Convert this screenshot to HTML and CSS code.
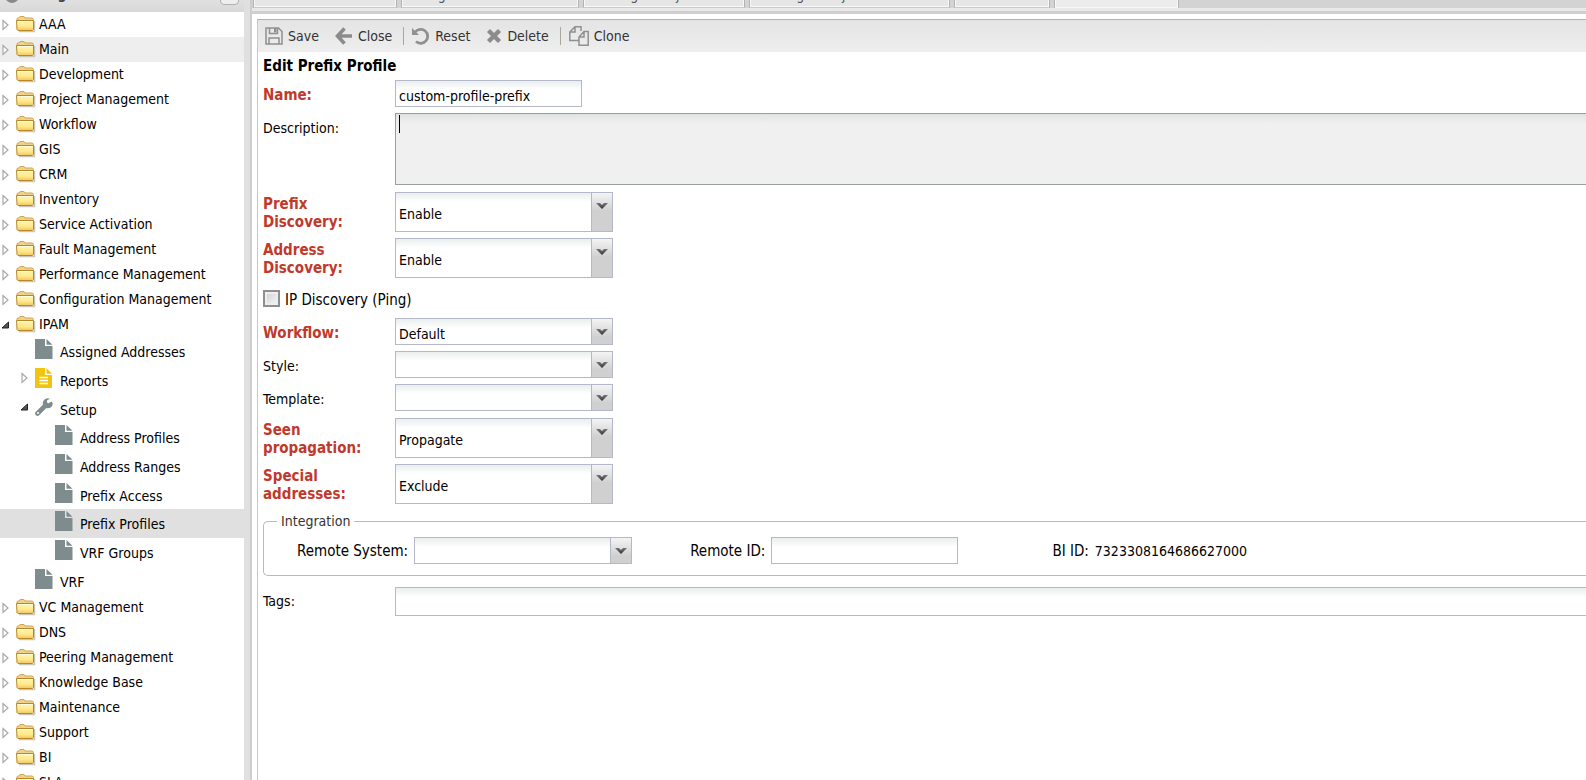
FILE: index.html
```
<!DOCTYPE html>
<html lang="en">
<head>
  <meta charset="UTF-8">
  <title>Prefix Profiles</title>
  <meta name="viewport" content="width=device-width, initial-scale=1">
  <link rel="stylesheet" href="styles.css">
</head>
<body>
  <svg class="sprite" aria-hidden="true">
    <defs>
      <linearGradient id="folderFill" x1="0" y1="0" x2="0" y2="1">
        <stop offset="0" stop-color="#fff8b4"/>
        <stop offset=".6" stop-color="#ffe88a"/>
        <stop offset="1" stop-color="#f2c45e"/>
      </linearGradient>
      <linearGradient id="chevronFill" x1="0" y1="0" x2="0" y2="1">
        <stop offset="0" stop-color="#777"/>
        <stop offset="1" stop-color="#333"/>
      </linearGradient>
      <symbol id="i-folder" viewBox="0 0 20 18">
        <path d="M3 16.5H18.5V6" fill="none" stroke="#c9c5bd" stroke-width="1.5"/>
        <path d="M1 6V3.500L2.500 3H3L4 1.500H8L9 3H16.500L17.500 4.500V6Z" fill="#f0d28a" stroke="#cfa552"/>
        <path d="M.5 5.500H17.500V14.500L16.500 15.500H2L1 14.500Z" fill="url(#folderFill)" stroke="#b98727"/>
        <path d="M2 6.500H16.500" stroke="#fffde0"/>
      </symbol>
      <symbol id="i-file" viewBox="0 0 18 20">
        <path d="M0 0H10V7H17.500V20H0Z" fill="#7f8c8d"/>
        <path d="M11.500 0L17.500 5.800H11.500Z" fill="#7f8c8d"/>
      </symbol>
      <symbol id="i-report" viewBox="0 0 18 20">
        <path d="M0 0H10V7H17V20H0Z" fill="#f1c40f"/>
        <path d="M11.500 0L17 5.800H11.500Z" fill="#f1c40f"/>
        <path d="M4.500 9.500H13M4.500 12.500H13M4.500 15.500H13" stroke="#fff" stroke-width="1.300"/>
      </symbol>
      <symbol id="i-wrench" viewBox="0 0 18 18">
        <path d="M2.500 15.500L11 7" stroke="#7f8c8d" stroke-width="4.600" stroke-linecap="round"/>
        <path d="M16.500 3.600L13.500 5.200L12 4.400V2.500L14.800 .7A5 5 0 1 0 17.800 5.500Z" fill="#7f8c8d"/>
        <circle cx="3" cy="15" r="1" fill="#fff"/>
      </symbol>
      <symbol id="i-closed" viewBox="0 0 8 12">
        <path d="M1.500 1.500L6.500 6L1.500 10.500Z" fill="#fff" stroke="#a8a8a8" stroke-width="1.200"/>
      </symbol>
      <symbol id="i-open" viewBox="0 0 9 9">
        <path d="M7.500 1.500V7.500H1Z" fill="#555" stroke="#222"/>
      </symbol>
      <symbol id="i-save" viewBox="0 0 18 18">
        <path d="M1 1H13.500L17 4.500V17H1Z M4.500 1V6.500H12.500V1 M4 17V11H14V17" fill="none" stroke="#909090" stroke-width="1.500"/>
        <path d="M9 1H11.500V5.500H9Z" fill="#909090"/>
      </symbol>
      <symbol id="i-close" viewBox="0 0 18 18">
        <path d="M9.500 1.500L2.500 9L9.500 16.500M3 9H17" fill="none" stroke="#8c8c8c" stroke-width="3.600"/>
      </symbol>
      <symbol id="i-reset" viewBox="0 0 18 18">
        <path d="M3.300 4.800A7 7 0 1 1 4 14.500" fill="none" stroke="#909090" stroke-width="2.800"/>
        <path d="M0 1V8H7Z" fill="#909090"/>
      </symbol>
      <symbol id="i-delete" viewBox="0 0 16 16">
        <path d="M2.500 2.500L13.500 13.500M13.500 2.500L2.500 13.500" stroke="#8c8c8c" stroke-width="4.400"/>
      </symbol>
      <symbol id="i-clone" viewBox="0 0 20 20">
        <path d="M10 14.500H.8V6L6 .8H12V5 M6 .8V6H.8 M10 11L15 5.500H19.200V19.200H10Z M15 5.500V11H10" fill="none" stroke="#909090" stroke-width="1.500"/>
      </symbol>
      <symbol id="i-chevron" viewBox="0 0 12 8">
        <path d="M0 1H4L6 3L8 1H12L6 7Z" fill="url(#chevronFill)"/>
      </symbol>
    </defs>
  </svg>

  <div class="app">
    <aside class="sidebar">
      <div class="sidebar-header">
        <span class="globe"></span>
        <h2>Navigation</h2>
        <button class="collapse" aria-label="Collapse"></button>
      </div>
      <nav>
        <ul class="tree">
          <li><a href="#"><svg class="arrow"><use href="#i-closed"/></svg><svg class="folder"><use href="#i-folder"/></svg>AAA</a></li>
          <li><a href="#" class="hover"><svg class="arrow"><use href="#i-closed"/></svg><svg class="folder"><use href="#i-folder"/></svg>Main</a></li>
          <li><a href="#"><svg class="arrow"><use href="#i-closed"/></svg><svg class="folder"><use href="#i-folder"/></svg>Development</a></li>
          <li><a href="#"><svg class="arrow"><use href="#i-closed"/></svg><svg class="folder"><use href="#i-folder"/></svg>Project Management</a></li>
          <li><a href="#"><svg class="arrow"><use href="#i-closed"/></svg><svg class="folder"><use href="#i-folder"/></svg>Workflow</a></li>
          <li><a href="#"><svg class="arrow"><use href="#i-closed"/></svg><svg class="folder"><use href="#i-folder"/></svg>GIS</a></li>
          <li><a href="#"><svg class="arrow"><use href="#i-closed"/></svg><svg class="folder"><use href="#i-folder"/></svg>CRM</a></li>
          <li><a href="#"><svg class="arrow"><use href="#i-closed"/></svg><svg class="folder"><use href="#i-folder"/></svg>Inventory</a></li>
          <li><a href="#"><svg class="arrow"><use href="#i-closed"/></svg><svg class="folder"><use href="#i-folder"/></svg>Service Activation</a></li>
          <li><a href="#"><svg class="arrow"><use href="#i-closed"/></svg><svg class="folder"><use href="#i-folder"/></svg>Fault Management</a></li>
          <li><a href="#"><svg class="arrow"><use href="#i-closed"/></svg><svg class="folder"><use href="#i-folder"/></svg>Performance Management</a></li>
          <li><a href="#"><svg class="arrow"><use href="#i-closed"/></svg><svg class="folder"><use href="#i-folder"/></svg>Configuration Management</a></li>
          <li>
            <a href="#"><svg class="arrow"><use href="#i-open"/></svg><svg class="folder"><use href="#i-folder"/></svg>IPAM</a>
            <ul class="branch">
              <li><a href="#" class="level-1"><svg class="page"><use href="#i-file"/></svg>Assigned Addresses</a></li>
              <li><a href="#" class="level-1 has-arrow"><svg class="arrow"><use href="#i-closed"/></svg><svg class="page"><use href="#i-report"/></svg>Reports</a></li>
              <li><a href="#" class="level-1 has-arrow"><svg class="arrow"><use href="#i-open"/></svg><svg class="page"><use href="#i-wrench"/></svg>Setup</a></li>
              <li><a href="#" class="level-2"><svg class="page"><use href="#i-file"/></svg>Address Profiles</a></li>
              <li><a href="#" class="level-2"><svg class="page"><use href="#i-file"/></svg>Address Ranges</a></li>
              <li><a href="#" class="level-2"><svg class="page"><use href="#i-file"/></svg>Prefix Access</a></li>
              <li><a href="#" class="level-2 selected"><svg class="page"><use href="#i-file"/></svg>Prefix Profiles</a></li>
              <li><a href="#" class="level-2"><svg class="page"><use href="#i-file"/></svg>VRF Groups</a></li>
              <li><a href="#" class="level-1"><svg class="page"><use href="#i-file"/></svg>VRF</a></li>
            </ul>
          </li>
          <li><a href="#"><svg class="arrow"><use href="#i-closed"/></svg><svg class="folder"><use href="#i-folder"/></svg>VC Management</a></li>
          <li><a href="#"><svg class="arrow"><use href="#i-closed"/></svg><svg class="folder"><use href="#i-folder"/></svg>DNS</a></li>
          <li><a href="#"><svg class="arrow"><use href="#i-closed"/></svg><svg class="folder"><use href="#i-folder"/></svg>Peering Management</a></li>
          <li><a href="#"><svg class="arrow"><use href="#i-closed"/></svg><svg class="folder"><use href="#i-folder"/></svg>Knowledge Base</a></li>
          <li><a href="#"><svg class="arrow"><use href="#i-closed"/></svg><svg class="folder"><use href="#i-folder"/></svg>Maintenance</a></li>
          <li><a href="#"><svg class="arrow"><use href="#i-closed"/></svg><svg class="folder"><use href="#i-folder"/></svg>Support</a></li>
          <li><a href="#"><svg class="arrow"><use href="#i-closed"/></svg><svg class="folder"><use href="#i-folder"/></svg>BI</a></li>
          <li><a href="#"><svg class="arrow"><use href="#i-closed"/></svg><svg class="folder"><use href="#i-folder"/></svg>SLA</a></li>
        </ul>
      </nav>
    </aside>

    <main class="workspace">
      <div class="tabs">
        <button class="tab" aria-label="Tab 1"></button>
        <button class="tab tab-segments">Segments</button>
        <button class="tab tab-objects">Managed Objects</button>
        <button class="tab tab-wide">Managed Objects</button>
        <button class="tab tab-narrow" aria-label="Tab 5"></button>
        <button class="tab tab-active" aria-label="Prefix Profiles"></button>
      </div>
      <section class="panel">
        <div class="toolbar">
          <button><svg><use href="#i-save"/></svg>Save</button>
          <button><svg><use href="#i-close"/></svg>Close</button>
          <span class="separator"></span>
          <button><svg><use href="#i-reset"/></svg>Reset</button>
          <button><svg class="small"><use href="#i-delete"/></svg>Delete</button>
          <span class="separator"></span>
          <button><svg class="large"><use href="#i-clone"/></svg>Clone</button>
        </div>
        <form class="form">
          <h1>Edit Prefix Profile</h1>
          <div class="row">
            <label class="required" for="name">Name:</label>
            <input class="text" type="text" id="name" value="custom-profile-prefix">
          </div>
          <div class="row area">
            <label for="description">Description:</label>
            <div class="editor">
              <textarea id="description"></textarea>
              <span class="caret"></span>
            </div>
          </div>
          <div class="row group">
            <label class="required" for="prefix-discovery">Prefix Discovery:</label>
            <div class="combo tall">
              <select id="prefix-discovery"><option>Enable</option></select>
              <span class="trigger"><svg><use href="#i-chevron"/></svg></span>
            </div>
          </div>
          <div class="row">
            <label class="required" for="address-discovery">Address Discovery:</label>
            <div class="combo tall">
              <select id="address-discovery"><option>Enable</option></select>
              <span class="trigger"><svg><use href="#i-chevron"/></svg></span>
            </div>
          </div>
          <div class="row check">
            <input type="checkbox" id="ping">
            <label for="ping">IP Discovery (Ping)</label>
          </div>
          <div class="row">
            <label class="required" for="workflow">Workflow:</label>
            <div class="combo">
              <select id="workflow"><option>Default</option></select>
              <span class="trigger"><svg><use href="#i-chevron"/></svg></span>
            </div>
          </div>
          <div class="row">
            <label for="style">Style:</label>
            <div class="combo">
              <select id="style"><option></option></select>
              <span class="trigger"><svg><use href="#i-chevron"/></svg></span>
            </div>
          </div>
          <div class="row">
            <label for="template">Template:</label>
            <div class="combo">
              <select id="template"><option></option></select>
              <span class="trigger"><svg><use href="#i-chevron"/></svg></span>
            </div>
          </div>
          <div class="row group">
            <label class="required" for="seen">Seen propagation:</label>
            <div class="combo tall">
              <select id="seen"><option>Propagate</option></select>
              <span class="trigger"><svg><use href="#i-chevron"/></svg></span>
            </div>
          </div>
          <div class="row">
            <label class="required" for="special">Special addresses:</label>
            <div class="combo tall">
              <select id="special"><option>Exclude</option></select>
              <span class="trigger"><svg><use href="#i-chevron"/></svg></span>
            </div>
          </div>
          <fieldset>
            <legend>Integration</legend>
            <div class="integration">
              <div class="field">
                <label for="remote-system">Remote System:</label>
                <div class="combo">
                  <select id="remote-system"><option></option></select>
                  <span class="trigger"><svg><use href="#i-chevron"/></svg></span>
                </div>
              </div>
              <div class="field">
                <label for="remote-id">Remote ID:</label>
                <input class="text" type="text" id="remote-id">
              </div>
              <div class="field">
                <span class="caption">BI ID:</span>
                <span>7323308164686627000</span>
              </div>
            </div>
          </fieldset>
          <div class="row">
            <label for="tags">Tags:</label>
            <input class="text tags" type="text" id="tags">
          </div>
        </form>
      </section>
    </main>
  </div>
</body>
</html>
```
FILE: styles.css
```
* {
  box-sizing: border-box;
}
body {
  margin: 0;
  height: 100vh;
  overflow: hidden;
  background: #fff;
  color: #000;
  font-family: 'DejaVu Sans Condensed', 'DejaVu Sans', sans-serif;
  font-size: 14px;
}
button, input, select, textarea {
  font: inherit;
  color: inherit;
}
ul {
  list-style: none;
  margin: 0;
  padding: 0;
}
.sprite {
  position: absolute;
  width: 0;
  height: 0;
}
/* the top of the page is scrolled out of view */
.app {
  display: flex;
  margin-top: -24px;
  height: calc(100vh + 24px);
}

/* navigation tree */
.sidebar {
  flex: none;
  width: 250px;
  overflow: hidden;
  border-right: 6px solid #e0e0e0;
}
.sidebar-header {
  display: flex;
  align-items: center;
  gap: 6px;
  height: 36px;
  padding: 0 5px 0 4px;
  background: linear-gradient(#f0f0f0, #d8d8d8);
}
.sidebar-header h2 {
  flex: 1;
  margin: 0;
  font-size: 14px;
  line-height: 18px;
  color: #444;
}
.globe {
  width: 16px;
  height: 18px;
  border-radius: 50%;
  background: #888;
}
.collapse {
  width: 19px;
  height: 19px;
  margin-top: 2px;
  padding: 0;
  border: 1px solid #b0b0b0;
  border-radius: 4px;
  background: #eee;
}
.tree a {
  display: flex;
  align-items: center;
  height: 25px;
  padding: 0 0 2px 1px;
  color: #000;
  text-decoration: none;
  white-space: nowrap;
}
.tree .hover {
  background: #eee;
}
.tree .selected {
  background: #e0e0e0;
}
.arrow {
  flex: none;
  width: 9px;
  height: 12px;
  margin-top: 3px;
  margin-right: 6px;
}
.folder {
  flex: none;
  width: 20px;
  height: 18px;
  margin-right: 3px;
}
.page {
  flex: none;
  width: 18px;
  height: 20px;
  margin-right: 7px;
}
.branch {
  display: grid;
  grid-auto-rows: 1fr;
  height: 258px;
}
.branch a {
  height: 100%;
  padding-top: 2px;
  padding-bottom: 0;
}
.branch .level-1 {
  padding-left: 35px;
}
.branch .has-arrow {
  padding-left: 20px;
}
.branch .level-2 {
  padding-left: 55px;
}
.branch .page {
  margin-bottom: 6px;
}
.branch .arrow {
  margin-top: 0;
  margin-bottom: 6px;
}

/* tabs */
.workspace {
  flex: 1;
  display: flex;
  flex-direction: column;
  min-width: 0;
  border-left: 2px solid #cecece;
}
.tabs {
  display: flex;
  align-items: flex-end;
  gap: 4px;
  height: 38px;
  padding-left: 1px;
  background: #d3d3d3;
  border-bottom: 3px solid #cfcfcf;
  box-shadow: inset 0 -3px #e9e9e9;
}
.tab {
  flex: none;
  width: 144px;
  height: 32px;
  margin-bottom: 3px;
  padding: 5px 12px 0;
  border: 1px solid #b3b3b3;
  border-bottom-color: #cacaca;
  background: #e6e6e6;
  box-shadow: inset 0 0 0 1px #f8f8f8;
  color: #555;
  text-align: left;
}
.tab-segments {
  width: 178px;
  padding-left: 20px;
}
.tab-objects {
  width: 162px;
}
.tab-wide {
  width: 201px;
}
.tab-narrow {
  width: 96px;
}
.tab-active {
  width: 125px;
  border-bottom: 0;
  background: #ececec;
}

/* edit panel */
.panel {
  flex: 1;
  margin: 5px 0 0 5px;
  border-top: 1px solid #b7adad;
  border-left: 1px solid #c8c8c8;
  overflow: hidden;
}
.toolbar {
  display: flex;
  align-items: center;
  height: 32px;
  padding-left: 7px;
  background: linear-gradient(#e5e4e4, #eee);
}
.toolbar button {
  display: flex;
  align-items: center;
  gap: 5px;
  margin-right: 16px;
  padding: 0;
  border: 0;
  background: none;
  color: #333;
}
.toolbar svg {
  width: 18px;
  height: 18px;
}
.toolbar .small {
  width: 16px;
  height: 16px;
}
.toolbar .large {
  width: 20px;
  height: 20px;
}
.separator {
  width: 1px;
  height: 18px;
  margin: 0 8px 0 -5px;
  background: #aca899;
}
.form {
  display: flex;
  flex-direction: column;
  gap: 6px;
  padding: 7px 0 0 5px;
}
.form h1 {
  margin: 0;
  font-size: 15px;
  line-height: 15px;
}
.row {
  display: flex;
  align-items: center;
}
.row.group {
  margin-top: 1px;
}
.row label {
  flex: none;
  width: 132px;
  padding-top: 3px;
  padding-right: 20px;
  line-height: 18px;
}
.row .required {
  padding-top: 2px;
  color: #c0392b;
  font-size: 15px;
  font-weight: bold;
}
.row.area {
  align-items: flex-start;
}
.area label {
  padding-top: 6px;
}
.text, .combo {
  width: 187px;
  height: 27px;
  border: 1px solid #b5b8c8;
  background: linear-gradient(#e9eeee, #fff 9px);
}
.text {
  padding: 4px 3px 0;
  outline: 0;
}
.row .tags {
  flex: 1;
  height: 29px;
  margin-top: 5px;
  border-right: 0;
}
.editor {
  flex: 1;
  position: relative;
  height: 72px;
}
textarea {
  display: block;
  width: 100%;
  height: 100%;
  padding: 1px 4px;
  border: 1px solid #999f9f;
  border-right: 0;
  outline: 0;
  resize: none;
  background: linear-gradient(#dfe4e3, #f0f0f0 10px);
}
.caret {
  position: absolute;
  top: 2px;
  left: 4px;
  width: 1px;
  height: 18px;
  background: #000;
}
.combo {
  display: flex;
  width: 218px;
}
.combo.tall {
  height: 40px;
}
.combo select {
  flex: 1;
  padding: 4px 3px 0;
  border: 0;
  outline: 0;
  appearance: none;
  background: none;
}
.trigger {
  width: 21px;
  padding: 9px 0 0 4px;
  border-left: 1px solid #b5b8c8;
  background: linear-gradient(#f4f4f4, #d0d0d0 18px);
  pointer-events: none;
}
.trigger svg {
  display: block;
  width: 12px;
  height: 8px;
}
.row.check {
  height: 28px;
  gap: 5px;
}
.check input {
  appearance: none;
  width: 17px;
  height: 17px;
  margin: 0;
  border: 2px solid #8e8f8f;
  background: linear-gradient(135deg, #ccd0d4, #f8f8f8);
  box-shadow: inset 0 0 0 2px #eee;
}
.check label {
  width: auto;
  font-size: 15px;
}
fieldset {
  min-width: 0;
  margin: 2px 0 0;
  padding: 7px 0 11px 33px;
  border: 1px solid #b5b8c8;
  border-right: 0;
  border-radius: 5px 0 0 5px;
}
legend {
  margin-left: -20px;
  padding: 0 4px;
  line-height: 18px;
  color: #333;
}
.integration {
  display: flex;
  gap: 58px;
}
.field {
  display: flex;
  align-items: center;
  gap: 6px;
  white-space: nowrap;
}
.field label, .caption {
  font-size: 15px;
}
.field:last-child {
  margin-left: 36px;
}
```
